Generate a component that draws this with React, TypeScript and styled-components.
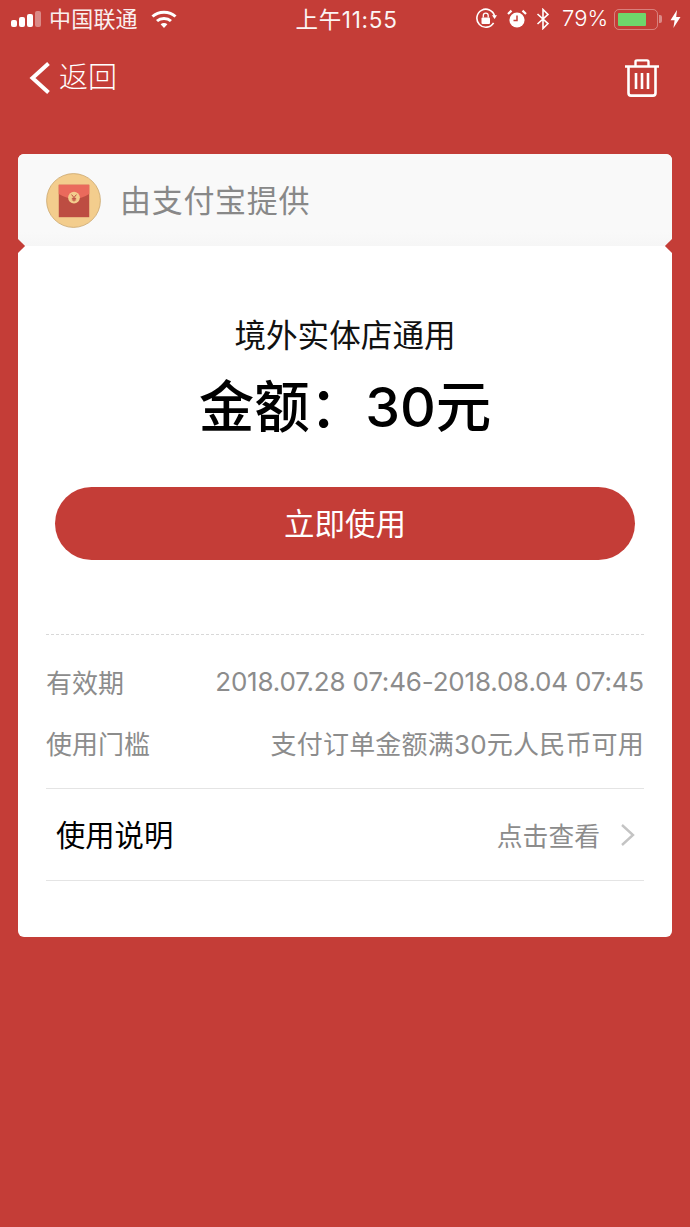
import styled, { createGlobalStyle } from "styled-components";

const RED = "#c43d37";
const FONT = `"Inter", "Noto Sans CJK SC", sans-serif`;

const GlobalStyle = createGlobalStyle`
  html, body {
    margin: 0;
    padding: 0;
    background: ${RED};
  }
  * {
    box-sizing: border-box;
  }
`;

export default function App() {
  return (
    <Page>
      <GlobalStyle />

      {/* status bar */}
      <StatusBar>
        <StatusLeft>
          <SignalBars>
            <Bar $h={7} />
            <Bar $h={10} />
            <Bar $h={13} />
            <Bar $h={16} $dim />
          </SignalBars>
          <Carrier>中国联通</Carrier>
          <svg width="26" height="20" viewBox="0 0 26 20">
            <path d="M1.5 7.5C7.5 1.7 18.5 1.7 24.5 7.5" fill="none" stroke="#fff" strokeWidth="3" />
            <path d="M6 12C9.8 8.6 16.2 8.6 20 12" fill="none" stroke="#fff" strokeWidth="3" />
            <path d="M9.6 15.2C11.6 13.6 14.4 13.6 16.4 15.2L13 19Z" fill="#fff" />
          </svg>
        </StatusLeft>
        <Clock>上午11:55</Clock>
        <StatusRight>
          <svg width="22" height="22" viewBox="0 0 22 22">
            <path d="M18.6 14.8A9 9 0 1 1 19.6 8" fill="none" stroke="#fff" strokeWidth="1.6" />
            <path d="M17 7.2L22 7.2L19.6 11Z" fill="#fff" />
            <rect x="6.5" y="9.5" width="8.5" height="6.5" rx="1" fill="#fff" />
            <path d="M8.3 9.5V7.6a2.4 2.4 0 0 1 4.9 0V9.5" fill="none" stroke="#fff" strokeWidth="1.3" />
          </svg>
          <AlarmIcon width="20" height="20" viewBox="0 0 20 20">
            <circle cx="10" cy="11" r="7.6" fill="#fff" />
            <path d="M10 6.5V11.5H6.5" fill="none" stroke={RED} strokeWidth="1.5" />
            <path d="M1 5L4.5 1.6M19 5L15.5 1.6" fill="none" stroke="#fff" strokeWidth="2.2" />
          </AlarmIcon>
          <BluetoothIcon width="14" height="22" viewBox="0 0 14 22">
            <path d="M1.5 6L12 15.6L7 20.5V1.5L12 6.4L1.5 16" fill="none" stroke="#fff" strokeWidth="1.6" />
          </BluetoothIcon>
          <Percent>79%</Percent>
          <Battery>
            <BatteryFill style={{ width: "79%" }} />
          </Battery>
          <BatteryCap />
          <svg width="11" height="18" viewBox="0 0 11 18">
            <path d="M7 0L0.5 10.2H4.6L3.4 18L10.5 7H6.2Z" fill="#fff" />
          </svg>
        </StatusRight>
      </StatusBar>

      {/* nav */}
      <NavBar>
        <BackLink>
          <svg width="24" height="34" viewBox="0 0 24 34">
            <path d="M20.5 2.5L4.5 17L20.5 31.5" fill="none" stroke="#fff" strokeWidth="4" />
          </svg>
          <BackText>返回</BackText>
        </BackLink>
        <svg width="36" height="38" viewBox="0 0 36 38">
          <path d="M1 7.5H35" stroke="#fff" strokeWidth="2.6" />
          <path d="M11.5 7V2.8Q11.5 1.4 13 1.4H23Q24.5 1.4 24.5 2.8V7" fill="none" stroke="#fff" strokeWidth="2.4" />
          <path d="M4.5 8V34Q4.5 36.6 7 36.6H29Q31.5 36.6 31.5 34V8" fill="none" stroke="#fff" strokeWidth="2.6" />
          <path d="M12 14V30M18 14V30M24 14V30" stroke="#fff" strokeWidth="2.6" />
        </svg>
      </NavBar>

      {/* card */}
      <Card>
        <CardHeader>
          <Avatar width="56" height="56" viewBox="0 0 56 56">
            <circle cx="28" cy="28" r="27.4" fill="#f3cd8d" stroke="#c9a66c" strokeWidth="0.8" />
            <rect x="13" y="12" width="31" height="33" fill="#bd4d42" />
            <path d="M13 12H44V21.5Q29 31 13 21.5Z" fill="#ea6a5c" />
            <circle cx="28.5" cy="25" r="6" fill="#f3cd8d" />
            <path d="M26 22L28.5 25L31 22M28.5 25V29M26.3 25.8H30.7M26.3 27.4H30.7" fill="none" stroke="#bd4d42" strokeWidth="1" />
          </Avatar>
          <Provider>由支付宝提供</Provider>
        </CardHeader>
        <Notch $side="left" />
        <Notch $side="right" />

        <CardBody>
          <Summary>
            <Scope>境外实体店通用</Scope>
            <Amount>金额：30元</Amount>
            <UseButton>立即使用</UseButton>
          </Summary>

          <InfoBlock>
            <InfoRow>
              <InfoLabel>有效期</InfoLabel>
              <InfoValue $spacing={-0.18}>2018.07.28 07:46-2018.08.04 07:45</InfoValue>
            </InfoRow>
            <InfoRow>
              <InfoLabel>使用门槛</InfoLabel>
              <InfoValue $spacing={0.2}>支付订单金额满30元人民币可用</InfoValue>
            </InfoRow>
          </InfoBlock>

          <GuideRow>
            <GuideTitle>使用说明</GuideTitle>
            <GuideLink>
              点击查看
              <svg width="16" height="24" viewBox="0 0 16 24">
                <path d="M2 2L13 12L2 22" fill="none" stroke="#c4c4c4" strokeWidth="2.4" />
              </svg>
            </GuideLink>
          </GuideRow>
        </CardBody>
      </Card>
    </Page>
  );
}

/* =========================
 * styles
 * ========================= */

const Page = styled.div`
  width: 690px;
  height: 1227px;
  overflow: hidden;
  background: ${RED};
  font-family: ${FONT};
`;

const StatusBar = styled.div`
  height: 38px;
  padding: 0 9px 0 11px;
  display: grid;
  grid-template-columns: 1fr auto 1fr;
  align-items: center;
  color: #fff;
`;

const StatusLeft = styled.div`
  display: flex;
  align-items: center;
`;

const SignalBars = styled.div`
  display: flex;
  align-items: flex-end;
  gap: 2px;
  margin-right: 8px;
`;

const Bar = styled.span<{ $h: number; $dim?: boolean }>`
  width: 6px;
  height: ${(p) => p.$h}px;
  border-radius: 2px;
  background: ${(p) => (p.$dim ? "rgba(255,255,255,0.4)" : "#fff")};
`;

const Carrier = styled.span`
  margin: -4px 13px 0 0;
  font-size: 22px;
  letter-spacing: 0.2px;
  opacity: 0.92;
`;

const Clock = styled.span`
  margin: -3px 0 0 1px;
  font-size: 22.5px;
  letter-spacing: 0.7px;
  opacity: 0.95;
`;

const StatusRight = styled.div`
  display: flex;
  align-items: center;
  justify-content: flex-end;
`;

const AlarmIcon = styled.svg`
  margin-left: 10px;
`;

const BluetoothIcon = styled.svg`
  margin-left: 9px;
`;

const Percent = styled.span`
  margin: -2px 0 0 12px;
  font-size: 22px;
  font-weight: 300;
`;

const Battery = styled.div`
  width: 44px;
  height: 21px;
  margin-left: 6px;
  padding: 3px;
  border: 1.5px solid rgba(255, 255, 255, 0.35);
  border-radius: 5px;
`;

const BatteryFill = styled.div`
  height: 100%;
  border-radius: 1px;
  background: #6fd66b;
`;

const BatteryCap = styled.span`
  width: 3px;
  height: 8px;
  margin: 0 8px 0 1px;
  border-radius: 0 2px 2px 0;
  background: rgba(255, 255, 255, 0.4);
`;

const NavBar = styled.div`
  height: 80px;
  padding: 0 30px 0 28px;
  display: flex;
  align-items: center;
  justify-content: space-between;
`;

const BackLink = styled.div`
  display: flex;
  align-items: center;
  gap: 7px;
  color: #fff;
`;

const BackText = styled.span`
  font-size: 29px;
  font-weight: 300;
  line-height: 34px;
`;

const Card = styled.div`
  position: relative;
  width: 654px;
  height: 783px;
  margin: 36px 0 0 18px;
  border-radius: 6px;
  overflow: hidden;
  background: #fff;
`;

const CardHeader = styled.div`
  height: 92px;
  padding: 0 28px 0 28px;
  display: flex;
  align-items: center;
  background: linear-gradient(#f9f9f9 85%, #f6f6f6);
`;

const Avatar = styled.svg`
  flex: none;
  width: 55px;
  height: 55px;
  margin-right: 20px;
`;

const Provider = styled.span`
  margin: -4px 0 0 -1px;
  font-size: 31px;
  letter-spacing: 0.7px;
  color: #888;
`;

const Notch = styled.span<{ $side: "left" | "right" }>`
  position: absolute;
  top: 87px;
  ${(p) => p.$side}: -5px;
  width: 10px;
  height: 10px;
  transform: rotate(45deg);
  background: ${RED};
`;

const CardBody = styled.div`
  padding: 0 28px;
`;

const Summary = styled.div`
  height: 389px;
  padding: 67px 10px 0;
  display: flex;
  flex-direction: column;
  align-items: center;
  border-bottom: 1px dashed #d8d8d8;
`;

const Scope = styled.div`
  font-size: 31.6px;
  line-height: 46px;
  color: #111;
`;

const Amount = styled.div`
  margin-top: 13px;
  font-size: 55.5px;
  font-weight: 500;
  line-height: 70px;
  color: #000;
`;

const UseButton = styled.button`
  width: 580px;
  height: 73px;
  margin-top: 45px;
  padding: 0 0 4px;
  border: none;
  border-radius: 37px;
  background: ${RED};
  color: #fff;
  font-family: ${FONT};
  font-size: 30.5px;
`;

const InfoBlock = styled.div`
  height: 154px;
  padding-top: 27px;
  display: flex;
  flex-direction: column;
  gap: 22px;
  border-bottom: 1px solid #e4e4e4;
`;

const InfoRow = styled.div`
  display: flex;
  justify-content: space-between;
  align-items: center;
  height: 39px;
  color: #8c8c8c;
`;

const InfoLabel = styled.span`
  font-size: 26px;
`;

const InfoValue = styled.span<{ $spacing: number }>`
  font-size: 26px;
  letter-spacing: ${(p) => p.$spacing}px;
`;

const GuideRow = styled.div`
  height: 92px;
  padding: 0 8px 0 10px;
  display: flex;
  justify-content: space-between;
  align-items: center;
  border-bottom: 1px solid #e4e4e4;
`;

const GuideTitle = styled.span`
  margin-top: -3px;
  font-size: 29.3px;
  color: #000;
`;

const GuideLink = styled.span`
  display: flex;
  align-items: center;
  gap: 20px;
  font-size: 25.8px;
  color: #8c8c8c;
`;
